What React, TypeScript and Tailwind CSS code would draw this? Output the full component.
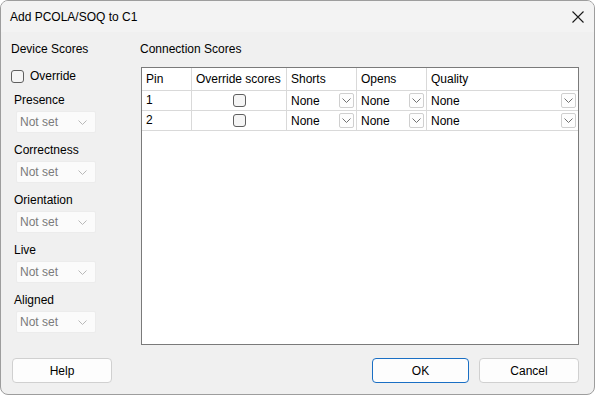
const font = { fontFamily: '"Segoe UI", "Liberation Sans", Arial, sans-serif' };

const Chevron = ({ color = "#606060" }: { color?: string }) => (
  <svg width="9" height="5" viewBox="0 0 9 5" fill="none">
    <path d="M0.5 0.5 L4.5 4.5 L8.5 0.5" stroke={color} strokeWidth="1" />
  </svg>
);

const Checkbox = () => (
  <div className="w-[13px] h-[13px] rounded-[3px] border border-[#5f5f5f] bg-[#f5f5f5]" />
);

const DeviceSelect = ({ label }: { label: string }) => (
  <div className="flex flex-col">
    <div className="h-[20px] pl-[3px] leading-[20px] text-black">{label}</div>
    <div className="mt-[1px] ml-[5px] w-[80px] h-[22px] flex items-center justify-between pl-[3px] pr-[8px] bg-[#fbfbfb] border border-[#ececec] rounded-[2px] text-[#7a7a7a]">
      <span>Not set</span>
      <Chevron color="#b8b8b8" />
    </div>
  </div>
);

const CellSelect = () => (
  <div className="flex items-center justify-between h-full pl-[4px] pr-[2px]">
    <span>None</span>
    <div className="w-[15px] h-[15px] border border-[#cfcfcf] bg-[#fdfdfd] rounded-[2px] flex items-center justify-center">
      <Chevron color="#707070" />
    </div>
  </div>
);

const cols = "grid grid-cols-[50px_95px_70px_70px_151px]";

const Row = ({ pin }: { pin: string }) => (
  <div className={`${cols} h-[20px] border-b border-[#d9d9d9]`}>
    <div className="pl-[4px] leading-[19px] border-r border-[#d9d9d9]">{pin}</div>
    <div className="flex items-center justify-center border-r border-[#d9d9d9]">
      <Checkbox />
    </div>
    <div className="border-r border-[#d9d9d9]"><CellSelect /></div>
    <div className="border-r border-[#d9d9d9]"><CellSelect /></div>
    <div><CellSelect /></div>
  </div>
);

export default function App() {
  return (
    <div
      style={font}
      className="w-[595px] h-[395px] flex flex-col bg-[#f0f0f0] border border-[#9d9d9d] rounded-[8px] overflow-hidden text-[12px] text-black"
    >
      <div className="h-[31px] flex items-center justify-between bg-[#f3f3f3] pl-[9px] pr-[9px]">
        <span>Add PCOLA/SOQ to C1</span>
        <svg width="12" height="12" viewBox="0 0 12 12" className="mr-[1px]">
          <path d="M0.5 0.5 L11.5 11.5 M11.5 0.5 L0.5 11.5" stroke="#1a1a1a" strokeWidth="1.1" />
        </svg>
      </div>

      <div className="flex pt-[7px]">
        <div className="w-[139px] pl-[10px] flex flex-col">
          <div className="h-[20px] leading-[20px]">Device Scores</div>
          <div className="h-[20px] mt-[7px] flex items-center gap-[6px]">
            <Checkbox />
            <span>Override</span>
          </div>
          <div className="mt-[4px] flex flex-col gap-[7px]">
            {["Presence", "Correctness", "Orientation", "Live", "Aligned"].map((l) => (
              <DeviceSelect key={l} label={l} />
            ))}
          </div>
        </div>

        <div className="flex-1 flex flex-col pr-[15px]">
          <div className="h-[20px] leading-[20px]">Connection Scores</div>
          <div className="mt-[8px] ml-[1px] h-[278px] bg-white border border-[#7a7a7a]">
            <div className={`${cols} h-[23px] border-b border-[#d9d9d9]`}>
              <div className="pl-[4px] leading-[22px] border-r border-[#d9d9d9]">Pin</div>
              <div className="pl-[4px] leading-[22px] border-r border-[#d9d9d9]">Override scores</div>
              <div className="pl-[4px] leading-[22px] border-r border-[#d9d9d9]">Shorts</div>
              <div className="pl-[4px] leading-[22px] border-r border-[#d9d9d9]">Opens</div>
              <div className="pl-[4px] leading-[22px]">Quality</div>
            </div>
            <Row pin="1" />
            <Row pin="2" />
          </div>
        </div>
      </div>

      <div className="flex items-start justify-between pl-[11px] pr-[15px] pt-[13px]">
        <button className="w-[100px] h-[25px] bg-[#fdfdfd] border border-[#d0d0d0] rounded-[4px]">Help</button>
        <div className="flex gap-[10px]">
          <button className="w-[97px] h-[25px] bg-[#fdfdfd] border border-[#1a6fc4] rounded-[4px]">OK</button>
          <button className="w-[100px] h-[25px] bg-[#fdfdfd] border border-[#d0d0d0] rounded-[4px]">Cancel</button>
        </div>
      </div>
    </div>
  );
}
